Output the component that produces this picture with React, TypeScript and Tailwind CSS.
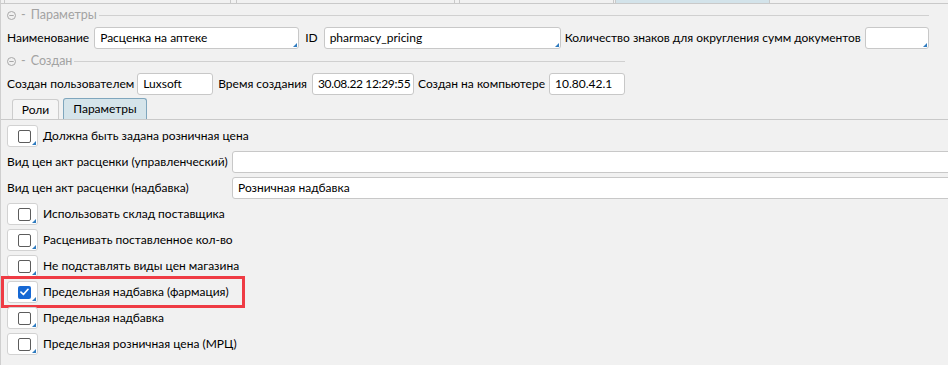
import React from "react";

function Corner() {
  return (
    <span className="absolute right-[1px] bottom-[1px] w-0 h-0 border-l-[4px] border-l-transparent border-b-[4px] border-b-[#2e7bbf]" />
  );
}

function Field({ w, value, corner = false, tight = false }: { w: number | string; value?: string; corner?: boolean; tight?: boolean }) {
  return (
    <div
      className={`relative h-[22px] shrink-0 bg-white border border-[#c8c8c8] rounded-[3px] flex items-center text-black whitespace-nowrap overflow-hidden ${tight ? "pl-[5px] pr-0 tracking-[-0.35px]" : "px-[5px]"}`}
      style={{ width: w }}
    >
      {value}
      {corner && <Corner />}
    </div>
  );
}

function Check({ checked = false }: { checked?: boolean }) {
  return (
    <div className="relative w-[31px] h-[22px] shrink-0 bg-white border border-[#d2d2d2] rounded-[3px] flex items-center pl-[10px]">
      {checked ? (
        <div className="w-[13px] h-[13px] rounded-[2px] bg-[#1668d4] flex items-center justify-center">
          <svg width="9" height="8" viewBox="0 0 9 8">
            <path d="M1 4.2 L3.4 6.5 L8 1.3" stroke="white" strokeWidth="1.7" fill="none" strokeLinecap="round" strokeLinejoin="round" />
          </svg>
        </div>
      ) : (
        <div className="w-[13px] h-[13px] rounded-[2px] border border-[#5c5c5c] bg-white" />
      )}
      <Corner />
    </div>
  );
}

function GroupHeader({ title, h }: { title: string; h: string }) {
  return (
    <div className={`flex items-center ${h} text-[#a3a3a3] text-[12.5px]`}>
      <svg width="9" height="9" viewBox="0 0 9 9" className="shrink-0">
        <circle cx="4.5" cy="4.5" r="4" stroke="#a8a8a8" strokeWidth="1" fill="none" />
        <line x1="2.3" y1="4.5" x2="6.7" y2="4.5" stroke="#a8a8a8" strokeWidth="1" />
      </svg>
      <span className="ml-[5px]">-</span>
      <span className="ml-[5px]">{title}</span>
      <div className="flex-1 h-px bg-[#d0d0d0] ml-[2px]" />
    </div>
  );
}

function CheckRow({ label, checked = false, marked = false }: { label: string; checked?: boolean; marked?: boolean }) {
  return (
    <div className="relative flex items-center h-[22px] gap-[5px]">
      <Check checked={checked} />
      <span className="whitespace-nowrap">{label}</span>
      {marked && (
        <div className="absolute left-[-6px] top-[-5px] w-[244px] h-[32px] border-[3px] border-[#ef3b44]" />
      )}
    </div>
  );
}

export default function App() {
  return (
    <div className="w-[948px] h-[365px] overflow-hidden bg-[#f1f1f1] border-l border-[#cfcfcf] font-['Lato',sans-serif] text-[12px] leading-none text-black">
      {/* top strip: bottoms of outer tabs */}
      <div className="flex h-[4px] border-b border-[#c9c9c9]">
        <div className="w-[3px]" />
        <div className="w-[227px] border-x border-[#c9c9c9]" />
        <div className="w-[5px]" />
        <div className="w-[219px] border-x border-[#c9c9c9]" />
        <div className="w-[4px]" />
        <div className="w-[155px] border-x border-[#c9c9c9]" />
        <div className="w-[1px]" />
        <div className="w-[155px] bg-[#d3e3ea] border-x border-[#c9c9c9]" />
        <div className="flex-1" />
      </div>

      <div className="pl-[6px]">
        {/* group Параметры */}
        <div className="w-fit">
          <GroupHeader title="Параметры" h="h-[23px]" />
          <div className="flex items-center h-[22px]">
            <span className="whitespace-nowrap">Наименование</span>
            <div className="ml-[5px]"><Field w={205} value="Расценка на аптеке" corner /></div>
            <span className="ml-[6px] whitespace-nowrap">ID</span>
            <div className="ml-[6px]"><Field w={237} value="pharmacy_pricing" corner /></div>
            <span className="ml-[4px] whitespace-nowrap">Количество знаков для округления сумм документов</span>
            <div className="ml-[4px]"><Field w={64} corner /></div>
          </div>
        </div>

        {/* group Создан */}
        <div className="w-fit">
          <GroupHeader title="Создан" h="h-[24px]" />
          <div className="flex items-center h-[22px]">
            <span className="whitespace-nowrap">Создан пользователем</span>
            <div className="ml-[3px]"><Field w={76} value="Luxsoft" /></div>
            <span className="ml-[5px] whitespace-nowrap">Время создания</span>
            <div className="ml-[5px]"><Field w={102} value="30.08.22 12:29:55" tight /></div>
            <span className="ml-[4px] whitespace-nowrap">Создан на компьютере</span>
            <div className="ml-[4px]"><Field w={76} value="10.80.42.1" /></div>
          </div>
        </div>
      </div>

      {/* inner tabs */}
      <div className="mt-[4px] flex items-end h-[21px] border-b border-[#c9c9c9] pl-[11px] gap-[4px]">
        <div className="h-[20px] w-[47px] flex items-center justify-center bg-[#f5f5f5] border border-b-0 border-[#cdcdcd] rounded-t-[3px]">
          Роли
        </div>
        <div className="h-[21px] w-[84px] flex items-center justify-center bg-[#d5e4ea] border border-b-0 border-[#7fa6bd] rounded-t-[3px]">
          Параметры
        </div>
      </div>

      {/* tab content */}
      <div className="pl-[6px] pt-[5px] flex flex-col gap-[4px]">
        <CheckRow label="Должна быть задана розничная цена" />
        <div className="flex items-center h-[22px]">
          <span className="w-[225px] shrink-0 whitespace-nowrap">Вид цен акт расценки (управленческий)</span>
          <div className="flex-1 mr-[-10px]"><Field w="100%" /></div>
        </div>
        <div className="flex items-center h-[22px]">
          <span className="w-[225px] shrink-0 whitespace-nowrap">Вид цен акт расценки (надбавка)</span>
          <div className="flex-1 mr-[-10px]"><Field w="100%" value="Розничная надбавка" /></div>
        </div>
        <CheckRow label="Использовать склад поставщика" />
        <CheckRow label="Расценивать поставленное кол-во" />
        <CheckRow label="Не подставлять виды цен магазина" />
        <CheckRow label="Предельная надбавка (фармация)" checked marked />
        <CheckRow label="Предельная надбавка" />
        <CheckRow label="Предельная розничная цена (МРЦ)" />
      </div>
    </div>
  );
}
